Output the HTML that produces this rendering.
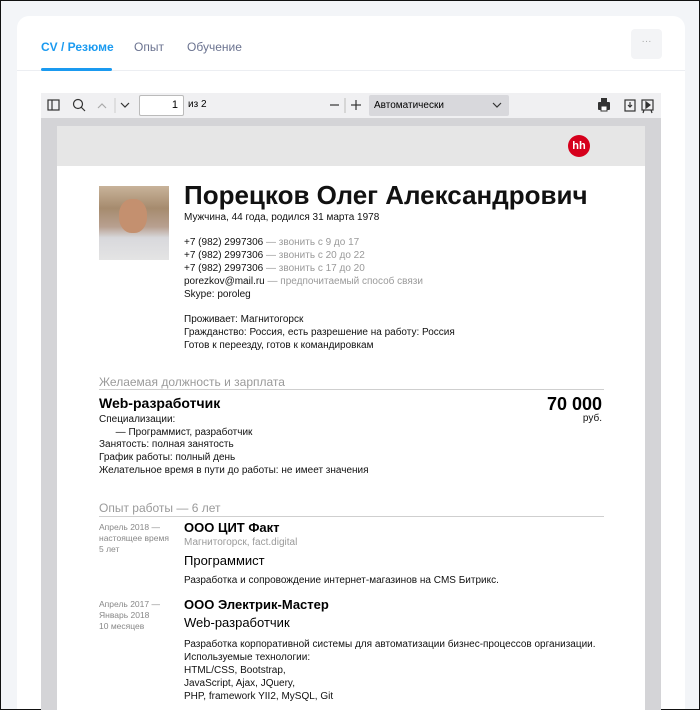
<!DOCTYPE html>
<html><head><meta charset="utf-8"><style>
*{margin:0;padding:0;box-sizing:border-box}
html,body{width:700px;height:710px;overflow:hidden}
body{background:#f3f5f8;font-family:"Liberation Sans","DejaVu Sans",sans-serif;position:relative;border:1px solid #111}
.card{position:absolute;left:16px;top:15px;width:668px;height:693px;background:#fff;border-radius:12px 12px 0 0}
.a{position:absolute;white-space:nowrap}
.tab{font-size:12px;color:#6b7390;top:39px}
.t{font-size:10px;color:#111;line-height:13px}
.g{color:#9a9a9a}
.sec{font-size:12px;color:#9a9a9a}
.hr{position:absolute;left:98px;width:505px;height:1px;background:#cfcfcf}
</style></head><body>
<div class="card"></div>
<div class="a tab" style="left:40px;color:#1a9af0;font-weight:bold">CV / Резюме</div>
<div class="a tab" style="left:133px">Опыт</div>
<div class="a tab" style="left:186px">Обучение</div>
<div class="a" style="left:16px;top:69px;width:668px;height:1px;background:#eceef2"></div>
<div class="a" style="left:40px;top:67px;width:71px;height:3px;background:#1a9af0;border-radius:2px"></div>
<div class="a" style="left:630px;top:28px;width:31px;height:30px;background:#f3f4f6;border-radius:4px;color:#aaa;font-size:10px;text-align:center;line-height:26px">···</div>
<div class="a" style="left:40px;top:92px;width:620px;height:25px;background:#f0f0f2"></div>
<svg class="a" style="left:40px;top:92px" width="620" height="25">
<g fill="none" stroke="#333" stroke-width="1.2">
<rect x="7" y="7" width="11" height="10"/><line x1="11" y1="7" x2="11" y2="17"/>
<circle cx="37" cy="11" r="4.5"/><line x1="40" y1="14" x2="44" y2="18"/>
<polyline points="57,15 61,11 65,15" stroke="#aaa"/>
<polyline points="80,10 84,14 88,10"/>
<line x1="289" y1="12" x2="298" y2="12"/><line x1="310" y1="12" x2="320" y2="12"/><line x1="315" y1="7" x2="315" y2="17"/>
<rect x="584" y="7" width="10" height="11"/><line x1="589" y1="9" x2="589" y2="14"/><polyline points="587,12 589,14 591,12"/>
<rect x="601" y="7" width="11" height="10"/><polygon points="605,9 605,15 609,12" fill="#333"/><line x1="603" y1="17" x2="602" y2="20"/><line x1="610" y1="17" x2="611" y2="20"/>
</g>
<line x1="74" y1="5" x2="74" y2="20" stroke="#ccc"/><line x1="304" y1="5" x2="304" y2="20" stroke="#bbb"/>
<rect x="557" y="9" width="12" height="8" rx="1" fill="#333"/><rect x="560" y="5" width="6" height="4" fill="#333"/><rect x="560" y="13" width="6" height="5" fill="#fff" stroke="#333"/>
</svg>
<div class="a" style="left:138px;top:94px;width:45px;height:21px;border:1px solid #bbb;border-radius:2px;background:#fff;font-size:11px;text-align:right;padding-right:5px;line-height:19px">1</div>
<div class="a" style="left:187px;top:98px;font-size:10px">из 2</div>
<div class="a" style="left:368px;top:94px;width:140px;height:21px;background:#d8d8dc;border-radius:2px;font-size:10px;line-height:21px;padding-left:5px">Автоматически</div>
<svg class="a" style="left:488px;top:94px" width="20" height="21"><polyline points="4,8 8,12 12,8" fill="none" stroke="#333" stroke-width="1.2"/></svg>
<div class="a" style="left:40px;top:117px;width:620px;height:593px;background:#d4d4d7"></div>
<div class="a" style="left:56px;top:125px;width:588px;height:585px;background:#fff"></div>
<div class="a" style="left:56px;top:125px;width:588px;height:40px;background:#e6e6e6"></div>
<div class="a" style="left:567px;top:134px;width:22px;height:22px;border-radius:50%;background:#d6001c;color:#fff;font-size:11px;font-weight:bold;text-align:center;line-height:22px">hh</div>
<div class="a" style="left:98px;top:185px;width:70px;height:74px;background:linear-gradient(180deg,#c8b39a 0%,#a68b6e 30%,#b8a090 55%,#d8d8dc 70%,#e4e4e4 100%)"></div>
<div class="a" style="left:118px;top:198px;width:28px;height:34px;border-radius:45%;background:#c4906f"></div>
<div class="a" style="left:183px;top:179px;font-size:26px;font-weight:bold;color:#111">Порецков Олег Александрович</div>
<div class="a t" style="left:183px;top:210px">Мужчина, 44 года, родился 31 марта 1978</div>
<div class="a t" style="left:183px;top:235px">+7 (982) 2997306 <span class="g">— звонить с 9 до 17</span><br>+7 (982) 2997306 <span class="g">— звонить с 20 до 22</span><br>+7 (982) 2997306 <span class="g">— звонить с 17 до 20</span><br>porezkov@mail.ru <span class="g">— предпочитаемый способ связи</span><br>Skype: poroleg</div>
<div class="a t" style="left:183px;top:312px">Проживает: Магнитогорск<br>Гражданство: Россия, есть разрешение на работу: Россия<br>Готов к переезду, готов к командировкам</div>
<div class="a sec" style="left:98px;top:374px">Желаемая должность и зарплата</div>
<div class="hr" style="top:388px"></div>
<div class="a" style="left:98px;top:394px;font-size:14px;font-weight:bold">Web-разработчик</div>
<div class="a" style="right:97px;top:393px;font-size:18px;font-weight:bold">70 000</div>
<div class="a t" style="right:97px;top:411px">руб.</div>
<div class="a t" style="left:98px;top:413px;line-height:12.7px">Специализации:<br>&nbsp;&nbsp;&nbsp;&nbsp;&nbsp;&nbsp;— Программист, разработчик<br>Занятость: полная занятость<br>График работы: полный день<br>Желательное время в пути до работы: не имеет значения</div>
<div class="a sec" style="left:98px;top:500px">Опыт работы — 6 лет</div>
<div class="hr" style="top:515px"></div>
<div class="a" style="left:98px;top:521px;font-size:8.5px;line-height:11px;color:#888">Апрель 2018 —<br>настоящее время<br>5 лет</div>
<div class="a" style="left:183px;top:519px;font-size:13px;font-weight:bold">ООО ЦИТ Факт</div>
<div class="a t g" style="left:183px;top:535px">Магнитогорск, fact.digital</div>
<div class="a" style="left:183px;top:552px;font-size:13px">Программист</div>
<div class="a t" style="left:183px;top:573px">Разработка и сопровождение интернет-магазинов на CMS Битрикс.</div>
<div class="a" style="left:98px;top:598px;font-size:8.5px;line-height:11px;color:#888">Апрель 2017 —<br>Январь 2018<br>10 месяцев</div>
<div class="a" style="left:183px;top:596px;font-size:13px;font-weight:bold">ООО Электрик-Мастер</div>
<div class="a" style="left:183px;top:614px;font-size:13px">Web-разработчик</div>
<div class="a t" style="left:183px;top:637px">Разработка корпоративной системы для автоматизации бизнес-процессов организации.<br>Используемые технологии:<br>HTML/CSS, Bootstrap,<br>JavaScript, Ajax, JQuery,<br>PHP, framework YII2, MySQL, Git</div>
</body></html>
